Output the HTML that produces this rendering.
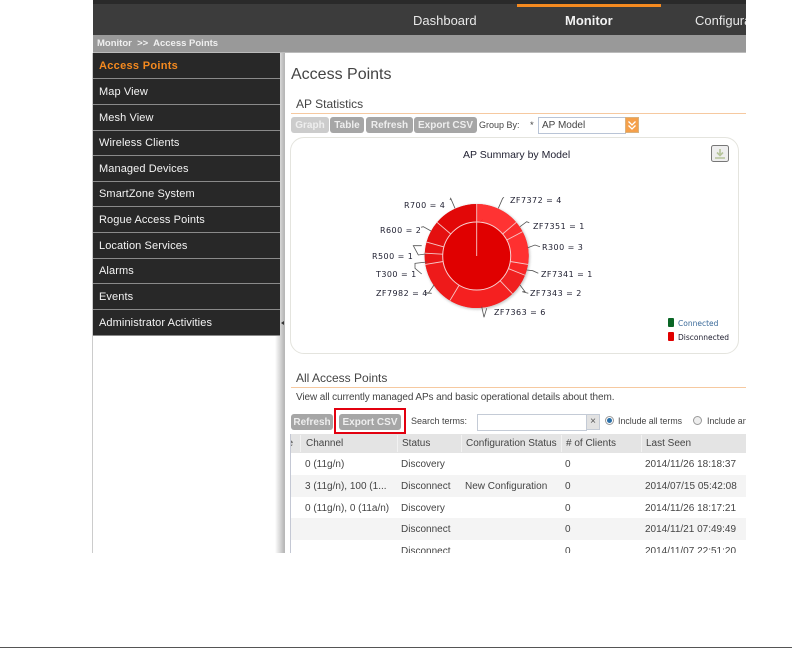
<!DOCTYPE html>
<html>
<head>
<meta charset="utf-8">
<title>Access Points</title>
<style>
html,body{margin:0;padding:0;background:#fff}
body{width:792px;height:648px;position:relative;overflow:hidden;font-family:"Liberation Sans",sans-serif;color:#333}
#app{position:absolute;left:93px;top:0;width:653px;height:553px;overflow:hidden;background:#fff}
.a{position:absolute;white-space:nowrap}
.item{position:absolute;left:0;width:187px;height:25px;overflow:hidden;border-bottom:1px solid #8a8a8a;color:#f4f4f4;font-size:11px;line-height:27px;text-indent:6px;letter-spacing:.1px}
.btn{position:absolute;height:16px;line-height:17px;background:#a6a6a6;border-radius:3px;color:#eee;font-size:10px;font-weight:bold;text-align:center;letter-spacing:0}
.h{position:absolute;top:434px;font-size:10px;line-height:19px;letter-spacing:0;color:#444}
.c{position:absolute;font-size:10px;line-height:12px;letter-spacing:0;color:#444;white-space:nowrap}
.div{position:absolute;top:435px;width:1px;height:17px;background:#f2f2f2}
.row{position:absolute;left:197px;width:456px}
svg text{font-family:"DejaVu Sans",sans-serif;font-size:8px;fill:#223;letter-spacing:.45px}
</style>
</head>
<body>
<div class="a" style="left:92px;top:53px;width:1px;height:500px;background:#ccc"></div>
<div id="app">
  <!-- top nav -->
  <div class="a" style="left:0;top:0;width:653px;height:4px;background:#2a2a2a"></div>
  <div class="a" style="left:0;top:4px;width:653px;height:31px;background:#3c3c3c"></div>
  <div class="a" style="left:424px;top:4px;width:144px;height:3px;background:#f58a1f"></div>
  <div class="a" style="left:320px;top:13px;font-size:13px;line-height:15px;color:#e8e8e8">Dashboard</div>
  <div class="a" style="left:472px;top:13px;font-size:13px;line-height:15px;color:#f2f2f2;font-weight:bold">Monitor</div>
  <div class="a" style="left:602px;top:13px;font-size:13px;line-height:15px;color:#e8e8e8">Configuration</div>
  <!-- breadcrumb -->
  <div class="a" style="left:0;top:35px;width:653px;height:17px;background:#999;border-bottom:1px solid #bbb"></div>
  <div class="a" style="left:4px;top:38px;font-size:9.5px;line-height:12px;font-weight:bold;color:#f0f0f0">Monitor &nbsp;&gt;&gt;&nbsp; Access Points</div>
  <!-- sidebar -->
  <div class="a" style="left:182px;top:53px;width:10px;height:500px;background:linear-gradient(90deg,#fff,#b8b8b8 90%)"></div>
  <div class="a" style="left:0;top:53px;width:187px;height:283px;background:#282828"></div>
  <div class="item" style="top:53px;color:#f58a1f;font-weight:bold;letter-spacing:.3px">Access Points</div>
  <div class="item" style="top:79px">Map View</div>
  <div class="item" style="top:105px">Mesh View</div>
  <div class="item" style="top:130px">Wireless Clients</div>
  <div class="item" style="top:156px">Managed Devices</div>
  <div class="item" style="top:181px">SmartZone System</div>
  <div class="item" style="top:207px">Rogue Access Points</div>
  <div class="item" style="top:233px">Location Services</div>
  <div class="item" style="top:258px">Alarms</div>
  <div class="item" style="top:284px">Events</div>
  <div class="item" style="top:310px">Administrator Activities</div>
  <div class="a" style="left:188px;top:321px;width:0;height:0;border-top:2.5px solid transparent;border-bottom:2.5px solid transparent;border-right:3px solid #333"></div>

  <!-- headings -->
  <div class="a" style="left:198px;top:65px;font-size:16px;line-height:19px;color:#444">Access Points</div>
  <div class="a" style="left:203px;top:97px;font-size:12px;line-height:14px;color:#444">AP Statistics</div>
  <div class="a" style="left:198px;top:113px;width:455px;height:1px;background:#f6c9a0"></div>
  <div class="btn" style="left:198px;top:117px;width:38px;background:#ccc">Graph</div>
  <div class="btn" style="left:237px;top:117px;width:34px">Table</div>
  <div class="btn" style="left:273px;top:117px;width:47px">Refresh</div>
  <div class="btn" style="left:321px;top:117px;width:63px">Export CSV</div>
  <div class="a" style="left:386px;top:120px;font-size:9px;line-height:11px;color:#444">Group By:</div>
  <div class="a" style="left:437px;top:120px;font-size:9.5px;line-height:11px;color:#444">*</div>
  <div class="a" style="left:445px;top:117px;width:86px;height:15px;border:1px solid #b9c4d6;background:#fff;font-size:10px;line-height:15px;text-indent:3px;color:#444">AP Model</div>
  <div class="a" style="left:532px;top:117px;width:14px;height:16px;background:#f5a04a;border:1px solid #d9b27f;box-sizing:border-box"></div>
  <svg class="a" style="left:532px;top:117px" width="14" height="16"><path d="M3.5 4.5L7 8L10.5 4.5M3.5 8.5L7 12L10.5 8.5" fill="none" stroke="#fff" stroke-width="1.3"/></svg>

  <!-- chart panel -->
  <div class="a" style="left:197px;top:137px;width:447px;height:215px;border:1px solid #e4e4de;border-radius:14px;background:#fff"></div>
  <svg class="a" style="left:-93px;top:0" width="792" height="553">
    <defs><filter id="s" x="-20%" y="-20%" width="140%" height="140%"><feGaussianBlur stdDeviation="1.2"/></filter></defs>
    <text x="463" y="158" style="font-family:'Liberation Sans',sans-serif;font-size:10.5px;letter-spacing:0">AP Summary by Model</text>
    <circle cx="477.5" cy="257" r="52.5" fill="#999" opacity=".55" filter="url(#s)"/>
    <g transform="translate(476.7 256)">
      <circle r="52" fill="#ee1a1a"/>
      <g transform="rotate(-90)" fill="none" stroke-width="18">
        <circle r="43" stroke="#ff3333" pathLength="29" stroke-dasharray="4 25" stroke-dashoffset="0"/>
        <circle r="43" stroke="#fb2c2c" pathLength="29" stroke-dasharray="1 28" stroke-dashoffset="-4"/>
        <circle r="43" stroke="#ff3030" pathLength="29" stroke-dasharray="3 26" stroke-dashoffset="-5"/>
        <circle r="43" stroke="#f82626" pathLength="29" stroke-dasharray="1 28" stroke-dashoffset="-8"/>
        <circle r="43" stroke="#f02020" pathLength="29" stroke-dasharray="2 27" stroke-dashoffset="-9"/>
        <circle r="43" stroke="#f52020" pathLength="29" stroke-dasharray="6 23" stroke-dashoffset="-11"/>
        <circle r="43" stroke="#ee1a1a" pathLength="29" stroke-dasharray="4 25" stroke-dashoffset="-17"/>
        <circle r="43" stroke="#e81616" pathLength="29" stroke-dasharray="1 28" stroke-dashoffset="-21"/>
        <circle r="43" stroke="#e61414" pathLength="29" stroke-dasharray="1 28" stroke-dashoffset="-22"/>
        <circle r="43" stroke="#e41010" pathLength="29" stroke-dasharray="2 27" stroke-dashoffset="-23"/>
        <circle r="43" stroke="#e20808" pathLength="29" stroke-dasharray="4 25" stroke-dashoffset="-25"/>
      </g>
      <circle r="34" fill="#e00000" stroke="#f8d0d0" stroke-width="1"/>
      <g stroke="#f6c8c8" stroke-width=".9">
        <line x1="0" y1="0" x2="0" y2="-52"/>
        <line y1="-34" y2="-52" transform="rotate(49.66)"/>
        <line y1="-34" y2="-52" transform="rotate(62.07)"/>
        <line y1="-34" y2="-52" transform="rotate(99.31)"/>
        <line y1="-34" y2="-52" transform="rotate(111.72)"/>
        <line y1="-34" y2="-52" transform="rotate(136.55)"/>
        <line y1="-34" y2="-52" transform="rotate(211.03)"/>
        <line y1="-34" y2="-52" transform="rotate(260.69)"/>
        <line y1="-34" y2="-52" transform="rotate(273.1)"/>
        <line y1="-34" y2="-52" transform="rotate(285.5)"/>
        <line y1="-34" y2="-52" transform="rotate(310.34)"/>
      </g>
    </g>
    <g fill="none" stroke="#555" stroke-width=".8">
      <polyline points="498.3,208.3 502.7,198.3 504,197.3"/>
      <polyline points="520,226.7 526.7,221.7 529.3,222.7"/>
      <polyline points="527.7,247.7 535,245 540,246.7"/>
      <polyline points="526.7,270 532.7,270.7 538.3,273.3"/>
      <polyline points="520,285 525,291.7 522.3,291.7 528.3,293.3"/>
      <polyline points="481.7,306.7 484,317.3 486.7,308.3"/>
      <polyline points="434,285 428.3,293.3 425,292.7 431.7,293.3"/>
      <polyline points="426.7,262 415,263.3 415,268.3 421.7,274"/>
      <polyline points="425.7,254 418.3,255 413.3,245.7 421.7,245.7"/>
      <polyline points="431,231 423.3,226.7 421,227.3"/>
      <polyline points="455,208.3 450.7,198.3 450,200"/>
    </g>
    <text x="510" y="203">ZF7372 = 4</text>
    <text x="533" y="229">ZF7351 = 1</text>
    <text x="542" y="250">R300 = 3</text>
    <text x="541" y="277">ZF7341 = 1</text>
    <text x="530" y="296">ZF7343 = 2</text>
    <text x="494" y="315">ZF7363 = 6</text>
    <text x="376" y="296">ZF7982 = 4</text>
    <text x="376" y="277">T300 = 1</text>
    <text x="372" y="259">R500 = 1</text>
    <text x="380" y="233">R600 = 2</text>
    <text x="404" y="208">R700 = 4</text>
    <rect x="711.5" y="145.5" width="17" height="16" rx="2" fill="#eee" stroke="#777"/>
    <path d="M720 149v6M717 152.5l3 3 3-3M715 158h10" fill="none" stroke="#b5c49a" stroke-width="1.6"/>
    <rect x="668" y="318" width="6" height="9" rx="1" fill="#0a6626"/>
    <rect x="668" y="332" width="6" height="9" rx="1" fill="#e00000"/>
    <text x="678" y="326" style="font-size:7.5px;fill:#3a6a9a;letter-spacing:0">Connected</text>
    <text x="678" y="340" style="font-size:7.5px;letter-spacing:0">Disconnected</text>
  </svg>

  <!-- all access points -->
  <div class="a" style="left:203px;top:371px;font-size:12px;line-height:14px;color:#444">All Access Points</div>
  <div class="a" style="left:198px;top:387px;width:455px;height:1px;background:#f6c9a0"></div>
  <div class="a" style="left:203px;top:392px;font-size:10px;line-height:12px;letter-spacing:-.1px;color:#444">View all currently managed APs and basic operational details about them.</div>
  <div class="btn" style="left:198px;top:414px;width:42px">Refresh</div>
  <div class="btn" style="left:246px;top:414px;width:62px">Export CSV</div>
  <div class="a" style="left:241px;top:408px;width:68px;height:22px;border:2px solid #e2000f"></div>
  <div class="a" style="left:318px;top:416px;font-size:9px;line-height:11px;color:#444">Search terms:</div>
  <div class="a" style="left:384px;top:414px;width:108px;height:15px;border:1px solid #c4cbd6;background:#fff"></div>
  <div class="a" style="left:493px;top:414px;width:14px;height:16px;background:#e2e2e2;border:1px solid #c4cbd6;box-sizing:border-box;text-align:center;font-size:10px;line-height:14px;color:#555">×</div>
  <div class="a" style="left:512px;top:416px;width:9px;height:9px;border-radius:50%;background:#fff;border:1px solid #999;box-sizing:border-box"></div>
  <div class="a" style="left:514px;top:418px;width:5px;height:5px;border-radius:50%;background:#2a6fa8"></div>
  <div class="a" style="left:525px;top:415px;font-size:8.8px;line-height:12px;color:#444">Include all terms</div>
  <div class="a" style="left:600px;top:416px;width:9px;height:9px;border-radius:50%;background:#eee;border:1px solid #999;box-sizing:border-box"></div>
  <div class="a" style="left:614px;top:415px;font-size:8.8px;line-height:12px;color:#444">Include any terms</div>

  <!-- table -->
  <div class="row" style="top:434px;height:19px;background:#e4e4e4"></div>
  <div class="row" style="top:475px;height:22px;background:#f4f4f4"></div>
  <div class="row" style="top:518px;height:22px;background:#f4f4f4"></div>
  <div class="a" style="left:197px;top:434px;width:1px;height:119px;background:#c4c8d4"></div>
  <div class="div" style="left:207px"></div>
  <div class="div" style="left:304px"></div>
  <div class="div" style="left:368px"></div>
  <div class="div" style="left:468px"></div>
  <div class="div" style="left:548px"></div>
  <div class="h" style="left:198px;width:2px;overflow:hidden;direction:rtl">e</div>
  <div class="h" style="left:213px">Channel</div>
  <div class="h" style="left:309px">Status</div>
  <div class="h" style="left:373px">Configuration Status</div>
  <div class="h" style="left:473px"># of Clients</div>
  <div class="h" style="left:553px">Last Seen</div>

  <div class="c" style="left:212px;top:459px">0 (11g/n)</div>
  <div class="c" style="left:308px;top:459px">Discovery</div>
  <div class="c" style="left:472px;top:459px">0</div>
  <div class="c" style="left:552px;top:459px">2014/11/26 18:18:37</div>

  <div class="c" style="left:212px;top:481px">3 (11g/n), 100 (1...</div>
  <div class="c" style="left:308px;top:481px">Disconnect</div>
  <div class="c" style="left:372px;top:481px">New Configuration</div>
  <div class="c" style="left:472px;top:481px">0</div>
  <div class="c" style="left:552px;top:481px">2014/07/15 05:42:08</div>

  <div class="c" style="left:212px;top:503px">0 (11g/n), 0 (11a/n)</div>
  <div class="c" style="left:308px;top:503px">Discovery</div>
  <div class="c" style="left:472px;top:503px">0</div>
  <div class="c" style="left:552px;top:503px">2014/11/26 18:17:21</div>

  <div class="c" style="left:308px;top:524px">Disconnect</div>
  <div class="c" style="left:472px;top:524px">0</div>
  <div class="c" style="left:552px;top:524px">2014/11/21 07:49:49</div>

  <div class="c" style="left:308px;top:546px">Disconnect</div>
  <div class="c" style="left:472px;top:546px">0</div>
  <div class="c" style="left:552px;top:546px">2014/11/07 22:51:20</div>
</div>
<div class="a" style="left:0;top:647px;width:792px;height:1px;background:#555"></div>
</body>
</html>
